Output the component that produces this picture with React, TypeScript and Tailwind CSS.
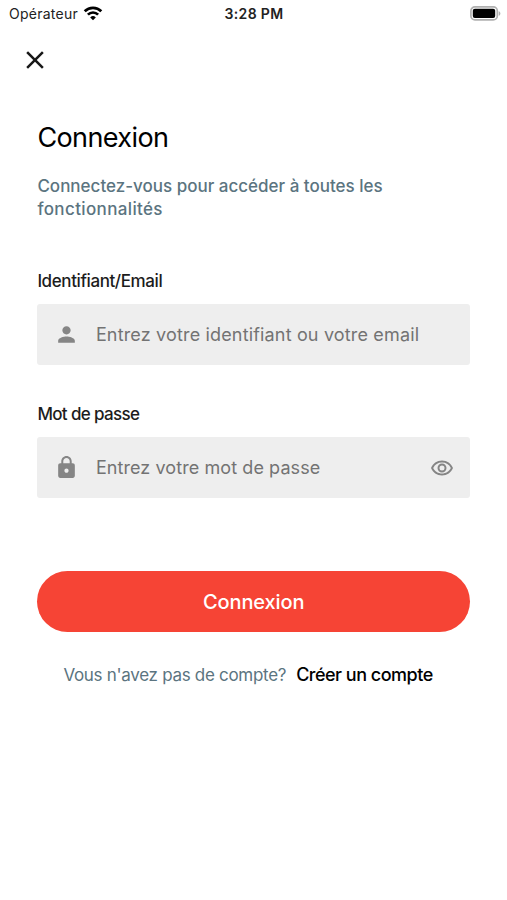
import type { ReactNode } from "react";
import { MdClose, MdLock, MdOutlineRemoveRedEye, MdPerson } from "react-icons/md";

function WifiIcon() {
  return (
    <svg viewBox="0 0 20 15" className="-mt-0.5 h-[15px] w-5" fill="none" stroke="#000" strokeWidth="2.7">
      <path d="M1.7 5.3a11.7 11.7 0 0 1 16.6 0" />
      <path d="M4.9 8.6a7.2 7.2 0 0 1 10.2 0" />
      <path d="M10 14.3 7.2 11.4a4 4 0 0 1 5.6 0z" fill="#000" stroke="none" />
    </svg>
  );
}

function BatteryIcon() {
  return (
    <svg viewBox="0 0 31 15" className="-mt-px h-[15px] w-[31px]">
      <rect x="0.9" y="0.9" width="26.4" height="13" rx="4" fill="#fff" stroke="#b0b0b0" strokeWidth="1.7" />
      <rect x="2.8" y="2.8" width="22.4" height="9.2" rx="2" fill="#000" />
      <path d="M28.7 5.2v4.6c1-.4 1.7-1.2 1.7-2.3s-.7-1.9-1.7-2.3z" fill="#b0b0b0" />
    </svg>
  );
}

function StatusBar() {
  return (
    <header className="grid h-7 grid-cols-3 items-center pr-[6px] pl-[9px] text-[14px] leading-5 text-[#222]">
      <div className="flex items-center gap-[5px]">
        <span className="tracking-[0.25px]">Opérateur</span>
        <WifiIcon />
      </div>
      <span className="pr-[2px] text-center font-semibold tracking-[0.35px]">3:28 PM</span>
      <div className="flex justify-end">
        <BatteryIcon />
      </div>
    </header>
  );
}

type FieldProps = {
  id: string;
  label: string;
  labelClass: string;
  type: string;
  placeholder: string;
  inputClass: string;
  icon: ReactNode;
  trailing?: ReactNode;
};

function Field({ id, label, labelClass, type, placeholder, inputClass, icon, trailing }: FieldProps) {
  return (
    <div>
      <label htmlFor={id} className={`block text-[17px] leading-6 font-medium text-[#1c1c1c] ${labelClass}`}>
        {label}
      </label>
      <div className="mt-[11px] flex h-[61px] items-center rounded-[3px] bg-[#eeeeee] px-[16.5px] text-[#858585]">
        {icon}
        <input
          id={id}
          type={type}
          placeholder={placeholder}
          className={`ml-[17px] min-w-0 flex-1 bg-transparent text-[18px] leading-6 outline-none placeholder:text-[#737373] ${inputClass}`}
        />
        {trailing}
      </div>
    </div>
  );
}

export default function App() {
  return (
    <div className="h-[900px] w-[507px] overflow-hidden bg-white font-['Inter',sans-serif]">
      <StatusBar />
      <div className="flex h-[63px] items-center pl-5">
        <button aria-label="Fermer">
          <MdClose className="size-[30px] text-[#181818]" />
        </button>
      </div>
      <main className="pt-[29px] pr-[37px] pl-[37.4px]">
        <h1 className="text-[27px] leading-9 tracking-[-0.6px] text-black">Connexion</h1>
        <p className="mt-[19px] text-[17px] leading-[23px] font-[450] text-[#5b7480]">
          <span>Connectez-vous pour accéder à toutes les</span>
          <br />
          <span className="tracking-[0.36px]">fonctionnalités</span>
        </p>
        <form className="mt-12">
          <Field
            id="email"
            label="Identifiant/Email"
            labelClass="tracking-[-0.4px]"
            type="text"
            placeholder="Entrez votre identifiant ou votre email"
            inputClass="tracking-[0.16px]"
            icon={<MdPerson className="size-[25px]" />}
          />
          <div className="h-[37px]" />
          <Field
            id="password"
            label="Mot de passe"
            labelClass="tracking-[-0.65px]"
            type="password"
            placeholder="Entrez votre mot de passe"
            inputClass="tracking-[0.08px]"
            icon={<MdLock className="size-[25px]" />}
            trailing={<MdOutlineRemoveRedEye className="size-6" />}
          />
          <button
            type="button"
            className="mt-[73px] block h-[61px] w-full rounded-full bg-[#f64435] pt-px text-[20px] font-medium tracking-[-0.1px] text-white"
          >
            Connexion
          </button>
        </form>
        <div className="mt-[31px] flex pl-[26px] text-[17px] leading-6">
          <span className="tracking-[-0.3px] text-[#5b7480]">Vous n'avez pas de compte?</span>
          <a className="ml-[10px] text-[18px] font-[450] tracking-[-0.5px] text-black">Créer un compte</a>
        </div>
      </main>
    </div>
  );
}
